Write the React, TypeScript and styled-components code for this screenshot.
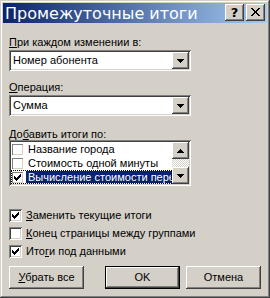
import React from "react";
import styled, { createGlobalStyle } from "styled-components";

const FACE = "#D4D0C8";

const GlobalStyle = createGlobalStyle`
  html, body { margin: 0; padding: 0; background: ${FACE}; }
  body {
    font-family: "Liberation Sans", Arial, sans-serif;
    font-size: 11px;
    color: #000;
  }
  * { box-sizing: border-box; }
`;

const raised = `box-shadow: inset -1px -1px #404040, inset 1px 1px #fff, inset -2px -2px #808080, inset 2px 2px ${FACE};`;
const sunken = `box-shadow: inset 1px 1px #808080, inset -1px -1px #fff, inset 2px 2px #404040, inset -2px -2px ${FACE};`;

const Window = styled.div`
  width: 270px;
  height: 298px;
  padding: 3px;
  background: ${FACE};
  box-shadow: inset -1px -1px #404040, inset 1px 1px ${FACE},
    inset -2px -2px #808080, inset 2px 2px #fff;
  display: flex;
  flex-direction: column;
`;

const TitleBar = styled.div`
  height: 20px;
  display: flex;
  align-items: flex-start;
  padding: 1px 2px 0 2px;
  background: linear-gradient(to right, #0a246a, #a6caf0);
  color: #fff;
`;

const TitleText = styled.div`
  flex: 1;
  font-family: "DejaVu Sans", Verdana, sans-serif;
  font-size: 16px;
  line-height: 19px;
  white-space: nowrap;
  overflow: hidden;
`;

const TitleButtons = styled.div`
  display: flex;
  gap: 2px;
`;

const TitleButton = styled.div`
  width: 19px;
  height: 17px;
  background: ${FACE};
  ${raised}
  display: flex;
  align-items: center;
  justify-content: center;
  color: #000;
  font-family: "DejaVu Sans", Verdana, sans-serif;
  font-weight: bold;
  font-size: 13px;
  line-height: 13px;
  padding-bottom: 1px;
`;

const Body = styled.div`
  flex: 1;
  display: flex;
  flex-direction: column;
  padding: 0 6px;
`;

const Label = styled.div<{ $mt: number }>`
  margin-top: ${(p) => p.$mt}px;
  height: 12px;
  line-height: 12px;
  white-space: nowrap;
`;

const U = styled.span`
  text-decoration: underline;
`;

const Combo = styled.div`
  margin-top: 2px;
  width: 182px;
  height: 21px;
  padding: 2px;
  background: #fff;
  ${sunken}
  display: flex;
  align-items: center;
`;

const ComboValue = styled.div`
  flex: 1;
  padding-left: 2px;
  line-height: 17px;
  white-space: nowrap;
  overflow: hidden;
`;

const ArrowButton = styled.div`
  width: 17px;
  height: 17px;
  flex-shrink: 0;
  background: ${FACE};
  ${raised}
  display: flex;
  align-items: center;
  justify-content: center;
`;

const List = styled.div`
  width: 182px;
  height: 46px;
  padding: 2px;
  background: #fff;
  ${sunken}
  display: flex;
`;

const Items = styled.div`
  flex: 1;
  display: flex;
  flex-direction: column;
  overflow: hidden;
`;

const Item = styled.div<{ $focused?: boolean }>`
  height: 14px;
  display: flex;
  align-items: center;
  white-space: nowrap;
  outline: ${(p) => (p.$focused ? "1px dotted #000" : "none")};
  outline-offset: -1px;
  padding-left: 1px;
`;

const ItemText = styled.span<{ $selected?: boolean }>`
  margin-left: 3px;
  padding: 0 2px;
  flex: 1;
  height: ${(p) => (p.$selected ? "12px" : "14px")};
  line-height: ${(p) => (p.$selected ? "12px" : "14px")};
  background: ${(p) => (p.$selected ? "#0a246a" : "transparent")};
  color: ${(p) => (p.$selected ? "#fff" : "#000")};
  overflow: hidden;
`;

const FlatBox = styled.span`
  width: 11px;
  height: 11px;
  flex-shrink: 0;
  background: #fff;
  box-shadow: inset 1px 1px #808080, inset -1px -1px ${FACE};
  display: flex;
  align-items: center;
  justify-content: center;
`;

const ScrollBar = styled.div`
  width: 17px;
  display: flex;
  flex-direction: column;
`;

const Track = styled.div`
  flex: 1;
  background-color: #fff;
  background-image: repeating-conic-gradient(${FACE} 0% 25%, #fff 0% 50%);
  background-size: 2px 2px;
`;

const Checks = styled.div`
  margin-top: 23px;
  display: flex;
  flex-direction: column;
  gap: 5px;
`;

const CheckRow = styled.div`
  height: 13px;
  display: flex;
  align-items: center;
  gap: 4px;
  white-space: nowrap;
  line-height: 13px;
`;

const CheckBox = styled.span`
  width: 13px;
  height: 13px;
  flex-shrink: 0;
  background: #fff;
  ${sunken}
  display: flex;
  align-items: center;
  justify-content: center;
`;

const ButtonRow = styled.div`
  margin-top: 8px;
  display: flex;
  align-items: center;
`;

const Spacer = styled.div`
  flex: 1;
`;

const Button = styled.div<{ $default?: boolean }>`
  width: 75px;
  height: 23px;
  margin-left: ${(p) => (p.$default ? "0" : "0")};
  background: ${FACE};
  ${(p) =>
    p.$default
      ? `border: 1px solid #000; box-shadow: inset -1px -1px #404040, inset 1px 1px #fff, inset -2px -2px #808080;`
      : raised}
  display: flex;
  align-items: center;
  justify-content: center;
  line-height: 13px;
  white-space: nowrap;
`;

const ButtonGap = styled.div`
  width: 6px;
`;

const Check = () => (
  <svg width="7" height="7" viewBox="0 0 7 7" shapeRendering="crispEdges">
    <path
      fill="#000"
      d="M6 0h1v1H6z M5 1h2v1H5z M0 2h1v1H0z M4 2h3v1H4z M0 3h2v1H0z M3 3h3v1H3z M0 4h5v1H0z M1 5h3v1H1z M2 6h1v1H2z"
    />
  </svg>
);

const Down = () => (
  <svg width="7" height="4" viewBox="0 0 7 4" shapeRendering="crispEdges">
    <path fill="#000" d="M0 0h7v1H0z M1 1h5v1H1z M2 2h3v1H2z M3 3h1v1H3z" />
  </svg>
);

const Up = () => (
  <svg width="7" height="4" viewBox="0 0 7 4" shapeRendering="crispEdges">
    <path fill="#000" d="M3 0h1v1H3z M2 1h3v1H2z M1 2h5v1H1z M0 3h7v1H0z" />
  </svg>
);

const CloseX = () => (
  <svg width="9" height="8" viewBox="0 0 9 8" shapeRendering="crispEdges">
    <path
      fill="#000"
      d="M0 0h2v1H0z M7 0h2v1H7z M1 1h2v1H1z M6 1h2v1H6z M2 2h2v1H2z M5 2h2v1H5z M3 3h3v1H3z M3 4h3v1H3z M2 5h2v1H2z M5 5h2v1H5z M1 6h2v1H1z M6 6h2v1H6z M0 7h2v1H0z M7 7h2v1H7z"
    />
  </svg>
);

const listItems = [
  { text: "Название города", checked: false },
  { text: "Стоимость одной минуты", checked: false },
  { text: "Вычисление стоимости переговоров", checked: true, selected: true },
];

export default function App() {
  return (
    <>
      <GlobalStyle />
      <Window>
        <TitleBar>
          <TitleText>Промежуточные итоги</TitleText>
          <TitleButtons>
            <TitleButton>?</TitleButton>
            <TitleButton>
              <CloseX />
            </TitleButton>
          </TitleButtons>
        </TitleBar>
        <Body>
          <Label $mt={13}>
            <U>П</U>ри каждом изменении в:
          </Label>
          <Combo>
            <ComboValue>Номер абонента</ComboValue>
            <ArrowButton>
              <Down />
            </ArrowButton>
          </Combo>
          <Label $mt={10}>
            <U>О</U>перация:
          </Label>
          <Combo>
            <ComboValue>Сумма</ComboValue>
            <ArrowButton>
              <Down />
            </ArrowButton>
          </Combo>
          <Label $mt={12}>
            До<U>б</U>авить итоги по:
          </Label>
          <List>
            <Items>
              {listItems.map((it) => (
                <Item key={it.text} $focused={it.selected}>
                  <FlatBox>{it.checked && <Check />}</FlatBox>
                  <ItemText $selected={it.selected}>{it.text}</ItemText>
                </Item>
              ))}
            </Items>
            <ScrollBar>
              <ArrowButton>
                <Up />
              </ArrowButton>
              <Track />
              <ArrowButton>
                <Down />
              </ArrowButton>
            </ScrollBar>
          </List>
          <Checks>
            <CheckRow>
              <CheckBox>
                <Check />
              </CheckBox>
              <span>
                <U>З</U>аменить текущие итоги
              </span>
            </CheckRow>
            <CheckRow>
              <CheckBox />
              <span>
                <U>К</U>онец страницы между группами
              </span>
            </CheckRow>
            <CheckRow>
              <CheckBox>
                <Check />
              </CheckBox>
              <span>
                Ито<U>г</U>и под данными
              </span>
            </CheckRow>
          </Checks>
          <ButtonRow>
            <Button>
              <span>
                <U>У</U>брать все
              </span>
            </Button>
            <Spacer />
            <Button $default>OK</Button>
            <ButtonGap />
            <Button>Отмена</Button>
          </ButtonRow>
        </Body>
      </Window>
    </>
  );
}
